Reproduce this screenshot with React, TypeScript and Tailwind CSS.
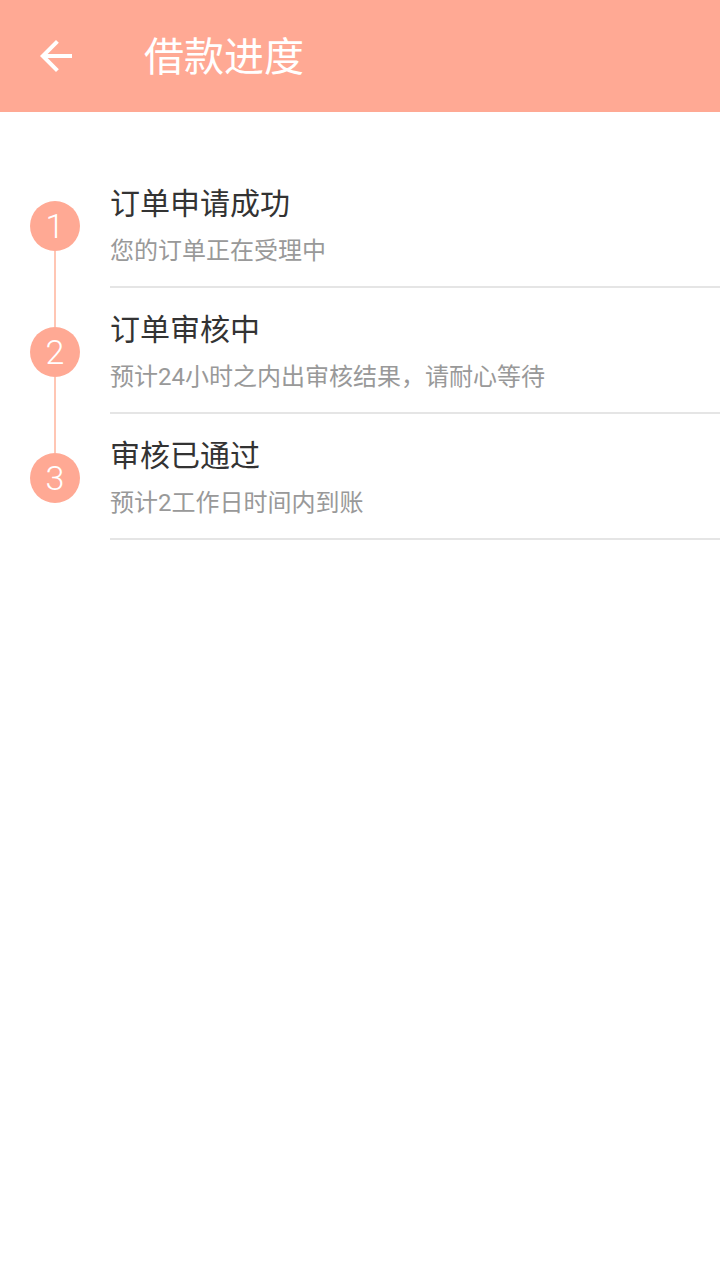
const steps = [
  { n: 1, title: "订单申请成功", desc: "您的订单正在受理中" },
  { n: 2, title: "订单审核中", desc: "预计24小时之内出审核结果，请耐心等待" },
  { n: 3, title: "审核已通过", desc: "预计2工作日时间内到账" },
]

const font = { fontFamily: 'Roboto, "Noto Sans CJK SC", sans-serif' }

const App = () => {
  return (
    <div className="w-[720px] h-[1280px] bg-white" style={font}>
      {/* header */}
      <div className="h-[112px] bg-[#ffa994] flex items-center">
        <button className="w-[48px] h-[48px] ml-[32px] flex items-center justify-center">
          <svg width="48" height="48" viewBox="0 0 24 24" fill="white">
            <path d="M20 11H7.83l5.59-5.59L12 4l-8 8 8 8 1.41-1.41L7.83 13H20v-2z" />
          </svg>
        </button>
        <h1 className="ml-[64px] mt-[4px] text-[40px] leading-none text-white font-normal">借款进度</h1>
      </div>

      {/* timeline */}
      <div className="pt-[50px]">
        {steps.map((s, i) => (
          <div key={s.n} className="flex h-[126px]">
            <div className="w-[110px] flex flex-col items-center">
              <div className={`w-[2px] h-[39px] ${i === 0 ? "" : "bg-[#ffc6b4]"}`} />
              <div className="w-[50px] h-[50px] rounded-full bg-[#ffa994] flex items-center justify-center text-white text-[34px] font-light leading-none">
                {s.n}
              </div>
              <div className={`w-[2px] flex-1 ${i === steps.length - 1 ? "" : "bg-[#ffc6b4]"}`} />
            </div>
            <div className="flex-1 border-b-2 border-[#e5e5e5] pt-[22px]">
              <div className="text-[30px] leading-[40px] text-[#333333]">{s.title}</div>
              <div className="mt-[11px] text-[24px] leading-[32px] text-[#999999]">{s.desc}</div>
            </div>
          </div>
        ))}
      </div>
    </div>
  )
}

export default App
